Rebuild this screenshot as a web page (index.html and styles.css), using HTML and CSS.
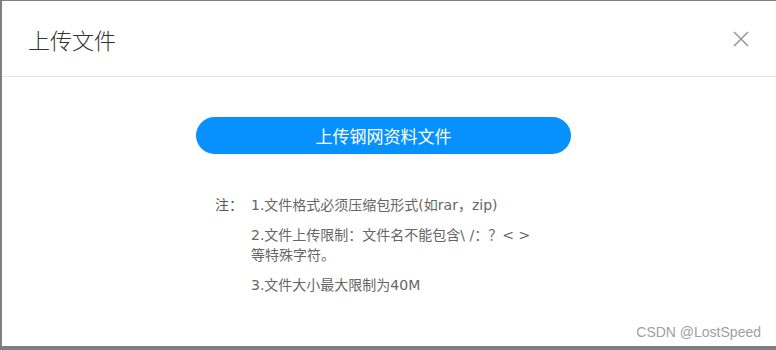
FILE: index.html
```html
<!DOCTYPE html>
<html lang="zh-CN">
<head>
    <meta charset="UTF-8">
    <meta name="viewport" content="width=device-width, initial-scale=1.0">
    <title>上传文件</title>
    <link rel="stylesheet" href="styles.css">
</head>
<body>
    <div class="dialog">
        <div class="dialog-header">
            <h2>上传文件</h2>
            <button type="button" class="close-btn" aria-label="关闭">
                <svg width="16" height="16" viewBox="0 0 16 16">
                    <path d="M1 1 L15 15 M15 1 L1 15" stroke="#9a9a9a" stroke-width="1.6" fill="none"/>
                </svg>
            </button>
        </div>
        <div class="dialog-body">
            <button type="button" class="upload-btn">上传钢网资料文件</button>
            <div class="notes">
                <span class="notes-label">注：</span>
                <ul>
                    <li>1.文件格式必须压缩包形式(如rar，zip)</li>
                    <li>2.文件上传限制：文件名不能包含\ /：？&lt; &gt;等特殊字符。</li>
                    <li>3.文件大小最大限制为40M</li>
                </ul>
            </div>
        </div>
        <div class="watermark">CSDN @LostSpeed</div>
    </div>
</body>
</html>
```

FILE: styles.css
```css
body {
    margin: 0;
    padding: 1px 0 0 2px;
    background-color: #7f7f7f;
    font-family: "Noto Sans CJK SC", "Noto Sans", sans-serif;
    height: 350px;
    box-sizing: border-box;
    overflow: hidden;
}
.dialog {
    position: relative;
    background: #fff;
    height: 345px;
}
.dialog-header {
    display: flex;
    align-items: center;
    justify-content: space-between;
    height: 75px;
    padding: 0 27px 0 26px;
    border-bottom: 1px solid #e4e4e4;
}
.dialog-header h2 {
    margin: 0;
    font-size: 22px;
    font-weight: 300;
    color: #333;
}
.close-btn {
    background: none;
    border: none;
    padding: 0;
    width: 16px;
    height: 16px;
    cursor: pointer;
}
.close-btn svg {
    display: block;
}
.dialog-body {
    padding: 40px 0 0 194px;
}
.upload-btn {
    display: block;
    width: 375px;
    height: 37px;
    border: none;
    border-radius: 19px;
    background-color: #0791ff;
    color: #fff;
    font-family: inherit;
    font-size: 17px;
    cursor: pointer;
}
.notes {
    display: flex;
    margin: 41px 0 0 19px;
    font-family: "DejaVu Sans", "Noto Sans CJK SC", sans-serif;
    font-size: 14px;
    line-height: 20px;
    color: #666;
}
.notes-label {
    width: 36px;
    flex-shrink: 0;
    color: #555;
}
.notes ul {
    margin: 0;
    padding: 0;
    list-style: none;
    width: 290px;
}
.notes li {
    margin-bottom: 10px;
}
.watermark {
    position: absolute;
    right: 15px;
    bottom: 6px;
    font-family: "Liberation Sans", Arial, sans-serif;
    font-size: 14px;
    color: #a0a0a0;
}
```
